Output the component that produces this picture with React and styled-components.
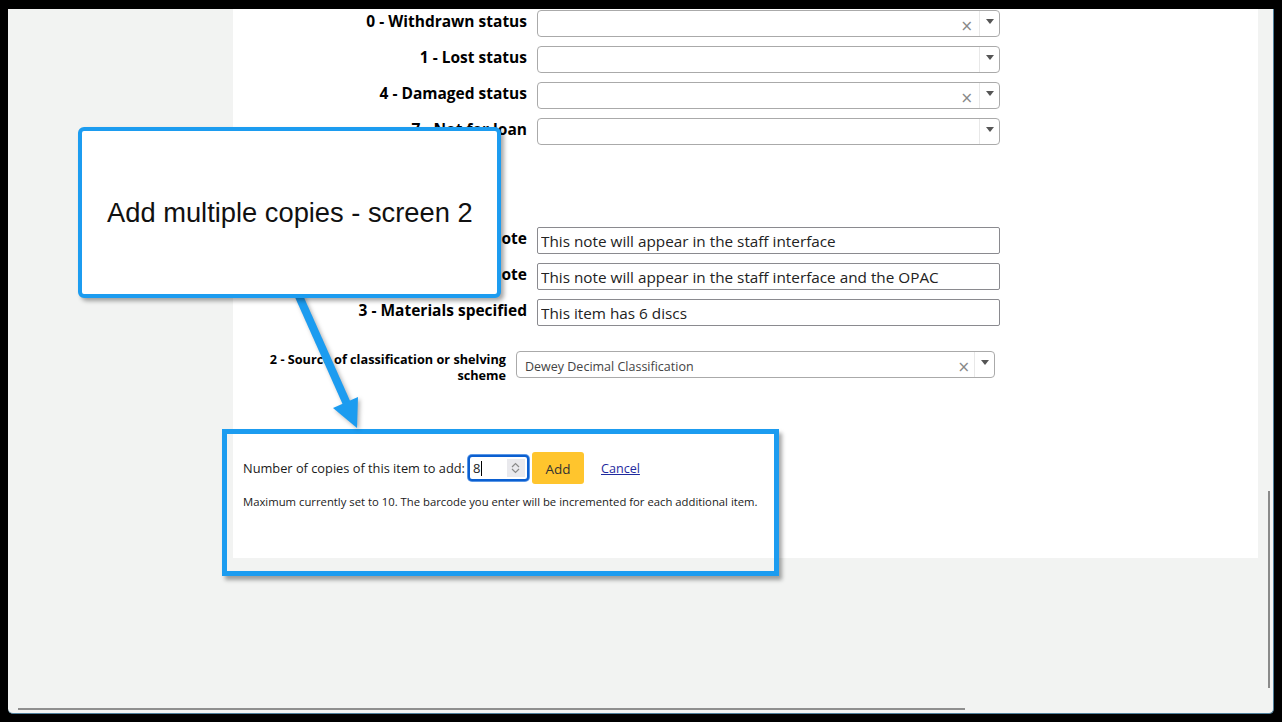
import React from "react";
import styled, { createGlobalStyle } from "styled-components";

const GlobalStyle = createGlobalStyle`
  html, body { margin: 0; padding: 0; background: #000; }
  body { font-family: "Open Sans", "Noto Sans", sans-serif; }
  * { box-sizing: border-box; }
`;

const BLUE = "#1c9cf0";

const Screen = styled.div`
  width: 1282px;
  height: 722px;
  padding: 9px 9px 8px 8px;
  background: #000;
  overflow: hidden;
`;

const Window = styled.div`
  position: relative;
  width: 1266px;
  height: 705px;
  background: #f2f3f2;
  border-right: 1px solid #4f7f9c;
  border-bottom: 1px solid #4f7f9c;
  border-radius: 0 0 5px 5px;
  overflow: hidden;
`;

const Panel = styled.div`
  margin-left: 225px;
  width: 1025px;
  height: 549px;
  background: #fff;
  padding-top: 1px;
  display: flex;
  flex-direction: column;
`;

const FieldGroup = styled.div`
  display: grid;
  grid-template-columns: ${(p) => p.$label || 294}px ${(p) => p.$field || 463}px;
  column-gap: 10px;
  row-gap: 9px;
  grid-auto-rows: 27px;
  margin-top: ${(p) => p.$top || 0}px;
`;

const Label = styled.label`
  text-align: right;
  font-weight: 700;
  font-size: 15.5px;
  line-height: 21px;
  color: #000;
  padding-top: 1px;
  white-space: nowrap;
`;

const SmallLabel = styled(Label)`
  font-size: 12.7px;
  line-height: 16px;
  white-space: normal;
  padding-top: 0;
`;

const SelectBox = styled.div`
  display: flex;
  align-items: stretch;
  height: 27px;
  border: 1px solid #aaa;
  border-radius: 4px;
  background: #fff;
`;

const SelectValue = styled.div`
  flex: 1;
  font-size: 12.5px;
  color: #444;
  line-height: 25px;
  padding-left: 8px;
  padding-top: 2px;
  white-space: nowrap;
  overflow: hidden;
`;

const Clear = styled.span`
  align-self: flex-end;
  font-family: "DejaVu Sans", sans-serif;
  font-size: 15px;
  line-height: 15px;
  color: #888;
  margin-right: ${(p) => p.$mr}px;
  margin-bottom: 2px;
`;

const ArrowCell = styled.div`
  width: 20px;
  border-left: 1px solid #e8e8e8;
  display: flex;
  justify-content: center;
  padding-top: 8px;
`;

const Caret = styled.span`
  width: 0;
  height: 0;
  border-left: 4px solid transparent;
  border-right: 4px solid transparent;
  border-top: 5px solid #555;
`;

const TextInput = styled.input`
  height: 27px;
  width: 100%;
  border: 1px solid #8a8a8f;
  border-radius: 2px;
  padding: 0 4px 0 3px;
  font-family: "Open Sans", "Noto Sans", sans-serif;
  font-size: 15.3px;
  color: #222;
  background: #fff;
  outline: none;
`;

const CopiesSection = styled.div`
  margin-top: 74px;
  padding-left: 10px;
  display: flex;
  flex-direction: column;
`;

const CopiesRow = styled.div`
  display: flex;
  align-items: center;
  height: 32px;
  font-size: 12.8px;
  color: #1a1a1a;
`;

const NumberWrap = styled.div`
  display: flex;
  align-items: center;
  width: 61px;
  height: 26px;
  margin-left: 3px;
  border: 2px solid #0b5fd0;
  border-radius: 4px;
  background: #fff;
  padding: 1px 2px 1px 3px;
  box-shadow: 0 0 0 1px #5a97e6;
`;

const NumberValue = styled.span`
  flex: 1;
  font-size: 13px;
  color: #222;
  display: flex;
  align-items: center;
`;

const Cursor = styled.span`
  display: inline-block;
  width: 1px;
  height: 15px;
  background: #000;
  margin-left: 1px;
`;

const Spinner = styled.div`
  width: 18px;
  height: 18px;
  background: #e9e9ed;
  display: flex;
  flex-direction: column;
  align-items: center;
  justify-content: center;
`;

const AddButton = styled.button`
  margin-left: 3px;
  width: 52px;
  height: 32px;
  border: none;
  border-radius: 3px;
  background: #ffc52d;
  font-family: "Open Sans", "Noto Sans", sans-serif;
  font-size: 13.5px;
  color: #333;
  padding: 2px 0 0;
`;

const CancelLink = styled.a`
  margin-left: 17px;
  font-size: 12.6px;
  color: #1f2a9e;
  text-decoration: underline;
`;

const Hint = styled.div`
  margin-top: 10px;
  font-size: 11.3px;
  color: #1a1a1a;
`;

const VScroll = styled.div`
  position: absolute;
  left: 1260px;
  top: 482px;
  width: 2px;
  height: 197px;
  background: #8a8a8a;
`;

const HScroll = styled.div`
  position: absolute;
  left: 10px;
  top: 699px;
  width: 947px;
  height: 2px;
  background: #8f8f8f;
`;

const Callout = styled.div`
  position: absolute;
  left: 70px;
  top: 118px;
  width: 423px;
  height: 171px;
  background: #fff;
  border: 4px solid ${BLUE};
  border-radius: 6px;
  box-shadow: 3px 3px 4px rgba(0, 0, 0, 0.35);
  display: flex;
  align-items: center;
  padding-left: 25px;
  padding-top: 1px;
  font-family: "Liberation Sans", Arial, sans-serif;
  font-size: 27.3px;
  color: #111;
`;

const Highlight = styled.div`
  position: absolute;
  left: 214px;
  top: 420px;
  width: 557px;
  height: 147px;
  border: 5px solid ${BLUE};
  box-shadow: 3px 4px 4px rgba(0, 0, 0, 0.35);
`;

const ArrowSvg = styled.svg`
  position: absolute;
  left: 262px;
  top: 271px;
  overflow: visible;
  filter: drop-shadow(2px 2px 2px rgba(0, 0, 0, 0.3));
`;

function Select({ value, clear, small }) {
  return (
    <SelectBox>
      <SelectValue>{value}</SelectValue>
      {clear && <Clear $mr={small ? 4 : 6}>×</Clear>}
      <ArrowCell>
        <Caret />
      </ArrowCell>
    </SelectBox>
  );
}

function Chevron({ up }) {
  return (
    <svg width="9" height="6" viewBox="0 0 9 6">
      <path
        d={up ? "M1 5 L4.5 1.5 L8 5" : "M1 1 L4.5 4.5 L8 1"}
        fill="none"
        stroke="#8a8a8a"
        strokeWidth="1.2"
      />
    </svg>
  );
}

export default function App() {
  return (
    <>
      <GlobalStyle />
      <Screen>
        <Window>
          <Panel>
            <FieldGroup>
              <Label>0 - Withdrawn status</Label>
              <Select clear />
              <Label>1 - Lost status</Label>
              <Select />
              <Label>4 - Damaged status</Label>
              <Select clear />
              <Label>7 - Not for loan</Label>
              <Select />
            </FieldGroup>
            <FieldGroup $top={82}>
              <Label>x - Non-public note</Label>
              <TextInput readOnly value="This note will appear in the staff interface" />
              <Label>z - Public note</Label>
              <TextInput readOnly value="This note will appear in the staff interface and the OPAC" />
              <Label>3 - Materials specified</Label>
              <TextInput readOnly value="This item has 6 discs" />
            </FieldGroup>
            <FieldGroup $top={25} $label={273} $field={479}>
              <SmallLabel>2 - Source of classification or shelving scheme</SmallLabel>
              <Select value="Dewey Decimal Classification" clear small />
            </FieldGroup>
            <CopiesSection>
              <CopiesRow>
                Number of copies of this item to add:
                <NumberWrap>
                  <NumberValue>
                    8<Cursor />
                  </NumberValue>
                  <Spinner>
                    <Chevron up />
                    <Chevron />
                  </Spinner>
                </NumberWrap>
                <AddButton>Add</AddButton>
                <CancelLink href="#">Cancel</CancelLink>
              </CopiesRow>
              <Hint>
                Maximum currently set to 10. The barcode you enter will be incremented for each additional item.
              </Hint>
            </CopiesSection>
          </Panel>
          <VScroll />
          <HScroll />
          <Highlight />
          <ArrowSvg width="110" height="160" viewBox="0 0 110 160">
            <line x1="28" y1="14" x2="77" y2="124" stroke={BLUE} strokeWidth="8" />
            <polygon points="87,148 63,128 88,117" fill={BLUE} />
          </ArrowSvg>
          <Callout>Add multiple copies - screen 2</Callout>
        </Window>
      </Screen>
    </>
  );
}
